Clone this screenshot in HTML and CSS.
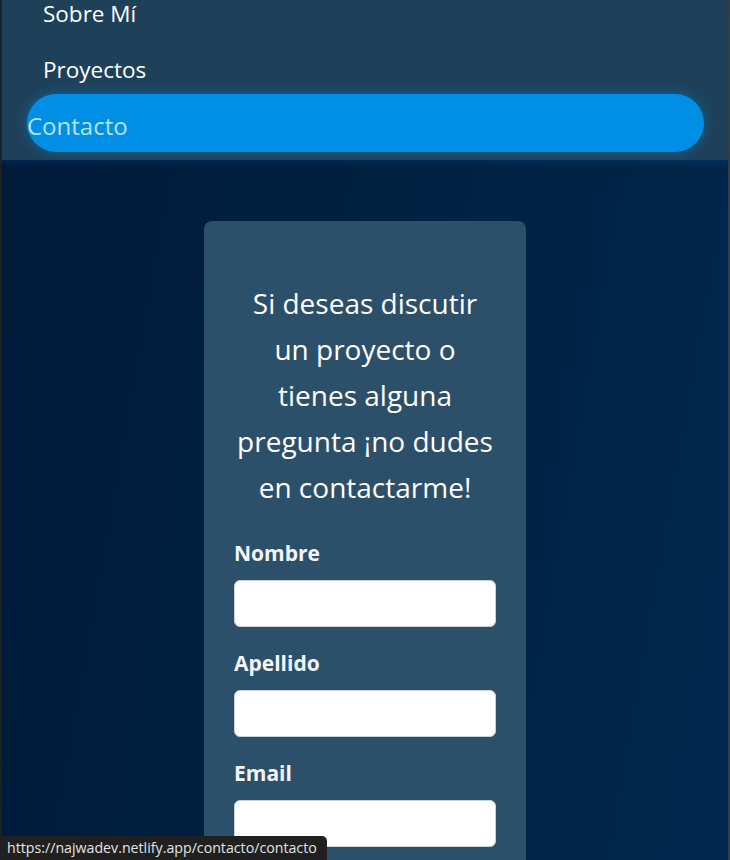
FILE: index.html
```html
<!DOCTYPE html>
<html lang="es">
<head>
<meta charset="utf-8">
<title>Contacto</title>
<link rel="stylesheet" href="styles.css">
</head>
<body>
<div class="frame">
  <nav class="nav">
    <ul class="nav-list">
      <li class="nav-item"><a href="#" class="nav-link">Sobre Mí</a></li>
      <li class="nav-item"><a href="#" class="nav-link">Proyectos</a></li>
      <li class="nav-item nav-item--active"><a href="#" class="nav-link nav-link--active">Contacto</a></li>
    </ul>
  </nav>
  <main class="main">
    <section class="card">
      <h2 class="card-title">Si deseas discutir<br>un proyecto o<br>tienes alguna<br>pregunta ¡no dudes<br>en contactarme!</h2>
      <form class="form">
        <div class="field">
          <label class="label" for="nombre">Nombre</label>
          <input class="input" id="nombre" type="text">
        </div>
        <div class="field">
          <label class="label" for="apellido">Apellido</label>
          <input class="input" id="apellido" type="text">
        </div>
        <div class="field">
          <label class="label" for="email">Email</label>
          <input class="input" id="email" type="email">
        </div>
      </form>
    </section>
  </main>
</div>
<div class="status">https://najwadev.netlify.app/contacto/contacto</div>
</body>
</html>
```
FILE: styles.css
```css
* { box-sizing: border-box; }
html, body { margin: 0; padding: 0; height: 100%; overflow: hidden; }
body {
  font-family: "Open Sans", "Noto Sans", sans-serif;
  background: #1f1f1f;
}
.frame {
  height: 100%;
  margin-left: 2px;
  border-right: 2px solid #3b3b3b;
  background: linear-gradient(100deg, #001a3a 0%, #00203f 45%, #00284f 100%);
  display: flex;
  flex-direction: column;
}
.nav {
  height: 160px;
  flex: none;
  background: #1f4059;
  box-shadow: 0 2px 6px rgba(0, 80, 140, 0.35);
  overflow: hidden;
  position: relative;
  z-index: 1;
}
.nav-list {
  list-style: none;
  margin: -15px 0 0 0;
  padding: 0;
  display: flex;
  flex-direction: column;
}
.nav-item {
  height: 56px;
  display: flex;
  align-items: center;
}
.nav-item--active {
  align-items: flex-start;
}
.nav-link {
  color: #ffffff;
  text-decoration: none;
  font-size: 22.5px;
  padding-left: 41px;
}
.nav-link--active {
  margin: -3px 24px 0 25px;
  padding-left: 0;
  flex: 1;
  height: 58px;
  display: flex;
  align-items: center;
  padding-top: 4px;
  background: #008fe4;
  border-radius: 29px;
  font-size: 24px;
  color: #b6e2fb;
  box-shadow: 0 0 14px rgba(0, 143, 228, 0.45);
}
.main {
  flex: 1;
  display: flex;
  justify-content: center;
  padding-top: 61px;
}
.card {
  width: 322px;
  background: #2c5069;
  border-radius: 8px;
  padding: 59px 30px 40px;
  align-self: flex-start;
}
.card-title {
  margin: 0 -12px 29px;
  font-weight: 400;
  font-size: 28px;
  line-height: 46px;
  text-align: center;
  white-space: nowrap;
  color: #ffffff;
}
.form {
  display: flex;
  flex-direction: column;
  gap: 22px;
}
.field {
  display: flex;
  flex-direction: column;
}
.label {
  font-weight: 700;
  font-size: 21px;
  line-height: 28px;
  color: #f2f6fa;
  margin-bottom: 13px;
}
.input {
  height: 47px;
  border: 1px solid #c9d1d9;
  border-radius: 6px;
  background: #ffffff;
  font-size: 16px;
}
.status {
  position: fixed;
  left: 0;
  bottom: 0;
  height: 24px;
  width: 327px;
  padding: 0 0 0 7px;
  background: #202020;
  border-top-right-radius: 5px;
  color: #e4e4e4;
  font-family: "Open Sans", "Noto Sans", sans-serif;
  font-size: 14.2px;
  line-height: 24px;
  white-space: nowrap;
  z-index: 5;
}
```
